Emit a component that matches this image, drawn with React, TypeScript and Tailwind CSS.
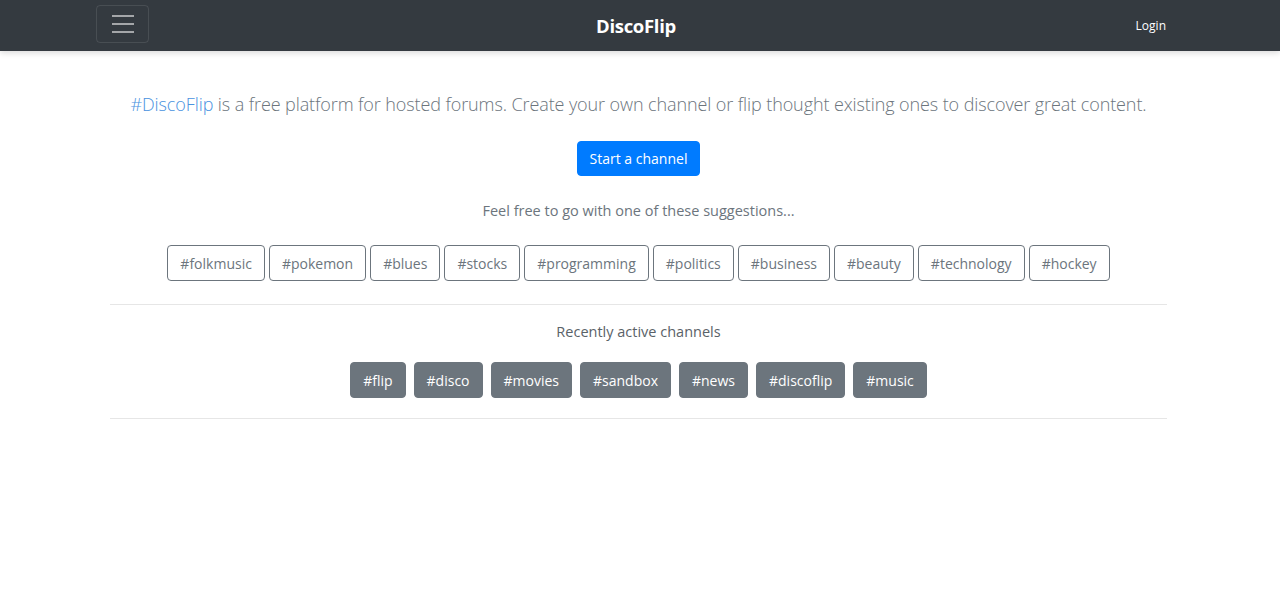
const suggestions = [
  "folkmusic",
  "pokemon",
  "blues",
  "stocks",
  "programming",
  "politics",
  "business",
  "beauty",
  "technology",
  "hockey",
];

const recent = ["flip", "disco", "movies", "sandbox", "news", "discoflip", "music"];

const font = "font-['Open_Sans','Noto_Sans',sans-serif]";

function Navbar() {
  return (
    <nav className="h-[51px] bg-[#343a40] shadow-[0_2px_6px_rgba(0,0,0,0.15)] relative z-10">
      <div className="ml-[96px] w-[1070px] h-full grid grid-cols-[1fr_auto_1fr] items-center">
        <div>
          <button className="w-[53px] h-[38px] mt-[-3px] border border-white/10 rounded flex flex-col items-center justify-center gap-[6px]">
            <span className="block w-[22px] h-[2px] bg-white/55" />
            <span className="block w-[22px] h-[2px] bg-white/55" />
            <span className="block w-[22px] h-[2px] bg-white/55" />
          </button>
        </div>
        <div className="text-white text-[18.5px] font-bold tracking-[-0.3px] pl-[10px]">DiscoFlip</div>
        <div className="flex justify-end">
          <span className="text-white text-[12px]">Login</span>
        </div>
      </div>
    </nav>
  );
}

export default function App() {
  return (
    <div className={`${font} min-h-[615px] bg-white`}>
      <Navbar />
      <main className="ml-[110px] w-[1057px] flex flex-col items-center text-center">
        <p className="mt-[38px] text-[18px] leading-[30px] font-light tracking-[-0.1px] text-[#6c757d] whitespace-nowrap">
          <span className="text-[#4a92e0]">#DiscoFlip</span> is a free platform for hosted forums. Create your own
          channel or flip thought existing ones to discover great content.
        </p>
        <button className="mt-[22px] h-[35px] px-[12px] border border-[#007bff] bg-[#007bff] text-white text-[14px] rounded-[4px]">
          Start a channel
        </button>
        <p className="mt-[23px] text-[14.5px] leading-[24px] text-[#6c757d]">
          Feel free to go with one of these suggestions...
        </p>
        <div className="mt-[22px] flex gap-[4px] justify-center">
          {suggestions.map((s) => (
            <span
              key={s}
              className="h-[36px] px-[12px] flex items-center border border-[#6c757d] rounded-[4px] text-[14px] text-[#6c757d]"
            >
              #{s}
            </span>
          ))}
        </div>
        <hr className="mt-[23px] w-full border-t border-[#e6e6e6]" />
        <p className="mt-[15px] text-[14.5px] leading-[24px] text-[#5a6268]">Recently active channels</p>
        <div className="mt-[18px] flex gap-[8px] justify-center">
          {recent.map((s) => (
            <span
              key={s}
              className="h-[36px] px-[12px] flex items-center border border-[#6c757d] bg-[#6c757d] rounded-[4px] text-[14px] text-white"
            >
              #{s}
            </span>
          ))}
        </div>
        <hr className="mt-[20px] w-full border-t border-[#e6e6e6]" />
      </main>
    </div>
  );
}
